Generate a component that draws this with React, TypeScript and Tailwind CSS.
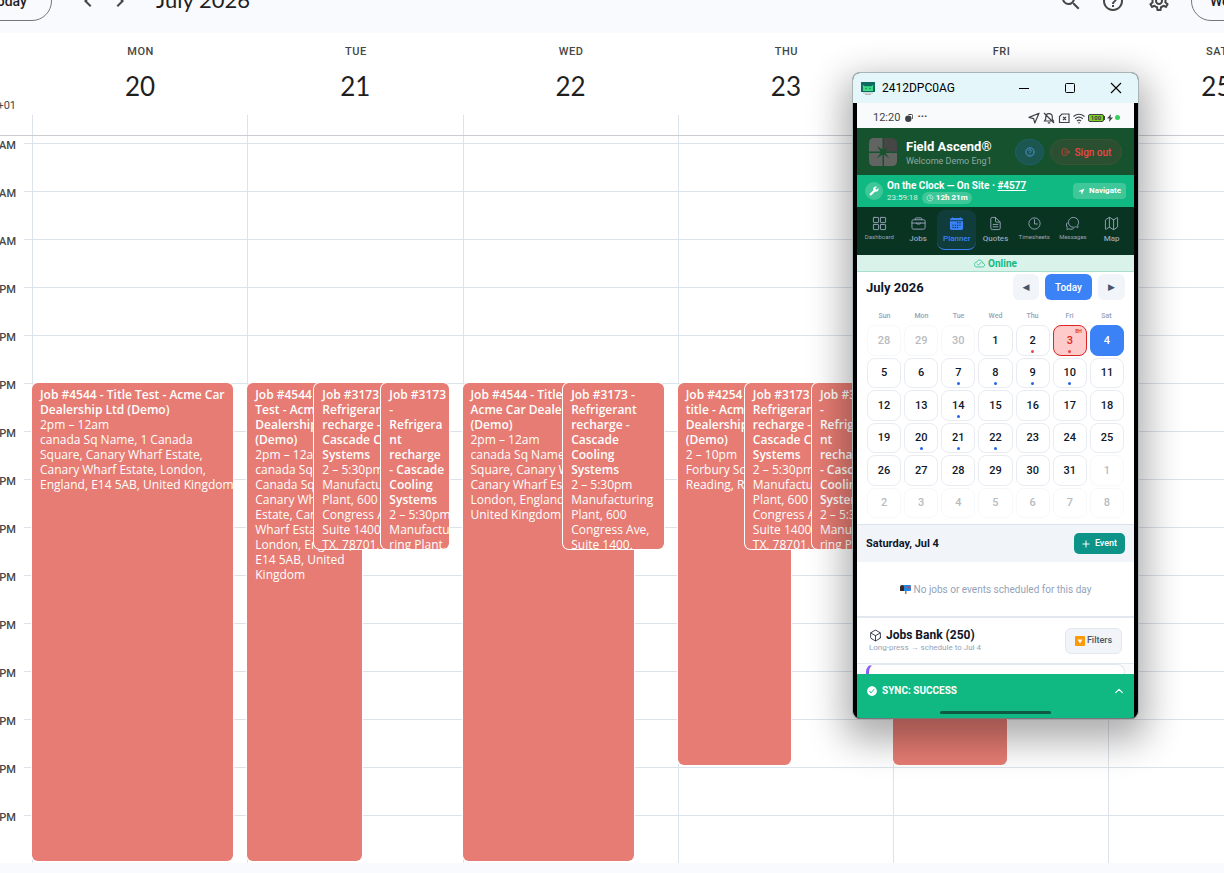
import { Fragment } from "react";
import {
  IoBriefcaseOutline,
  IoCalendar,
  IoChatbubblesOutline,
  IoCheckmarkCircle,
  IoChevronUp,
  IoCloudDoneOutline,
  IoCubeOutline,
  IoDocumentTextOutline,
  IoGridOutline,
  IoHelpCircleOutline,
  IoLogOutOutline,
  IoMapOutline,
  IoNavigate,
  IoTimeOutline,
} from "react-icons/io5";
import { MdBuild, MdChevronLeft, MdChevronRight, MdHelpOutline, MdOutlineSettings, MdSearch } from "react-icons/md";

const HOUR_HEIGHT = 48;
const FIRST_HOUR = 9;

type CalendarEvent = {
  left: number;
  width: number;
  from: number;
  to: number;
  title: string[];
  details: string[];
};

type Day = {
  name: string;
  date: number;
  events: CalendarEvent[];
};

const refrigerantDetails = ["2 – 5:30pm", "Manufacturing", "Plant, 600", "Congress Ave,", "Suite 1400,", "TX, 78701,"];

const narrowRefrigerant = (left: number): CalendarEvent => ({
  left,
  width: 53,
  from: 14,
  to: 17.5,
  title: ["Job #3173 -", "Refrigerant", "recharge -", "Cascade Cooling", "Systems"],
  details: refrigerantDetails,
});

const lastRefrigerant = (left: number): CalendarEvent => ({
  left,
  width: 31.4,
  from: 14,
  to: 17.5,
  title: ["Job #3173", "-", "Refrigera", "nt", "recharge", "- Cascade", "Cooling", "Systems"],
  details: ["2 – 5:30pm", "Manufactu", "ring Plant,"],
});

const days: Day[] = [
  {
    name: "MON",
    date: 20,
    events: [
      {
        left: 0,
        width: 94,
        from: 14,
        to: 24,
        title: ["Job #4544 - Title Test - Acme Car", "Dealership Ltd (Demo)"],
        details: [
          "2pm – 12am",
          "canada Sq Name, 1 Canada",
          "Square, Canary Wharf Estate,",
          "Canary Wharf Estate, London,",
          "England, E14 5AB, United Kingdom",
        ],
      },
    ],
  },
  {
    name: "TUE",
    date: 21,
    events: [
      {
        left: 0,
        width: 53.4,
        from: 14,
        to: 24,
        title: ["Job #4544 - Title", "Test - Acme Car", "Dealership Ltd", "(Demo)"],
        details: [
          "2pm – 12am",
          "canada Sq Name, 1",
          "Canada Square,",
          "Canary Wharf",
          "Estate, Canary",
          "Wharf Estate,",
          "London, England,",
          "E14 5AB, United",
          "Kingdom",
        ],
      },
      narrowRefrigerant(31.3),
      lastRefrigerant(62.6),
    ],
  },
  {
    name: "WED",
    date: 22,
    events: [
      {
        left: 0,
        width: 80,
        from: 14,
        to: 24,
        title: ["Job #4544 - Title Test -", "Acme Car Dealership Ltd", "(Demo)"],
        details: [
          "2pm – 12am",
          "canada Sq Name, 1 Canada",
          "Square, Canary Wharf",
          "Canary Wharf Estate,",
          "London, England, E14 5AB,",
          "United Kingdom",
        ],
      },
      {
        left: 47,
        width: 47,
        from: 14,
        to: 17.5,
        title: ["Job #3173 -", "Refrigerant", "recharge -", "Cascade", "Cooling", "Systems"],
        details: refrigerantDetails.slice(0, 5),
      },
    ],
  },
  {
    name: "THU",
    date: 23,
    events: [
      {
        left: 0,
        width: 53,
        from: 14,
        to: 22,
        title: ["Job #4254 - Job", "title - Acme Car", "Dealership Ltd", "(Demo)"],
        details: ["2 – 10pm", "Forbury Square,", "Reading, RG1"],
      },
      narrowRefrigerant(31.3),
      lastRefrigerant(62.6),
    ],
  },
  {
    name: "FRI",
    date: 24,
    events: [{ left: 0, width: 53.4, from: 14, to: 22, title: [], details: [] }],
  },
  { name: "SAT", date: 25, events: [] },
];

const hours = Array.from({ length: 15 }, (_, i) => {
  const hour = FIRST_HOUR + i;
  return hour < 12 ? `${hour} AM` : `${hour === 12 ? 12 : hour - 12} PM`;
});

const EventCard = ({ event }: { event: CalendarEvent }) => (
  <div
    className="absolute overflow-hidden rounded-md bg-[#e67c73] px-2 pt-1 font-['Open_Sans'] text-xs leading-[15px] text-white ring-1 ring-white"
    style={{
      left: `calc(${event.left}% - 1px)`,
      width: `${event.width}%`,
      top: (event.from - FIRST_HOUR) * HOUR_HEIGHT,
      height: (event.to - event.from) * HOUR_HEIGHT - 2,
    }}
  >
    {event.title.map((line) => (
      <div key={line} className="font-semibold whitespace-nowrap">
        {line}
      </div>
    ))}
    {event.details.map((line) => (
      <div key={line} className="whitespace-nowrap">
        {line}
      </div>
    ))}
  </div>
);

const TopBar = () => (
  <header className="flex h-[33px] flex-col justify-end overflow-hidden">
    <div className="-ml-9 -mr-12 flex h-16 shrink-0 items-center text-[#444746]">
      <button className="h-10 w-[88px] shrink-0 rounded-full border border-[#747775] text-sm font-medium text-[#1f1f1f]">
        Today
      </button>
      <button className="ml-5 flex w-8 items-center justify-center" aria-label="Previous week">
        <MdChevronLeft className="size-6" />
      </button>
      <button className="flex w-8 items-center justify-center" aria-label="Next week">
        <MdChevronRight className="size-6" />
      </button>
      <h1 className="ml-5 pb-0.5 font-[Lato] text-[22px] leading-7 text-[#1f1f1f]">July 2026</h1>
      <div className="ml-auto flex items-center">
        <button className="mr-[18px]" aria-label="Search">
          <MdSearch className="size-6" />
        </button>
        <button className="mr-[22px]" aria-label="Help">
          <MdHelpOutline className="size-6" />
        </button>
        <button className="mr-5" aria-label="Settings">
          <MdOutlineSettings className="size-6" />
        </button>
        <button className="h-10 w-[81px] rounded-full border border-[#747775] pl-[18px] text-left text-sm font-medium text-[#1f1f1f]">
          Week
        </button>
      </div>
    </div>
  </header>
);

const WeekView = () => (
  <main className="flex overflow-hidden bg-white">
    <div className="w-8 shrink-0">
      <div className="flex h-[103px] items-end justify-end border-b border-[#c9ccd1] pr-4 pb-[21px] text-[11px] whitespace-nowrap text-[#444746]">
        GMT+01
      </div>
      <div className="mt-[7px]">
        {hours.map((hour) => (
          <div key={hour} className="flex h-12">
            <span className="-mt-[5px] flex w-4 justify-end text-[11px] font-medium whitespace-nowrap text-[#444746]">{hour}</span>
            <span className="ml-2 w-2 border-t border-[#dde3ea]" />
          </div>
        ))}
      </div>
    </div>
    <div className="min-w-0 flex-1">
      <div className="w-[108.35%]">
        <div className="grid h-[103px] grid-cols-6 border-b border-[#c9ccd1]">
          {days.map((day) => (
            <div key={day.name} className="flex flex-col text-center">
              <div className="pt-3 pl-0.5 text-[11px] leading-[14px] font-medium tracking-wider text-[#444746]">{day.name}</div>
              <div className="mt-[11px] pl-px font-[Lato] text-[26px] leading-8 text-[#1f1f1f]">{day.date}</div>
              <div className="mt-auto h-5 border-l border-[#dde3ea]" />
            </div>
          ))}
        </div>
        <div className="grid">
          <div className="col-start-1 row-start-1 pt-[7px]">
            {hours.map((hour) => (
              <div key={hour} className="h-12 border-t border-[#dde3ea]" />
            ))}
          </div>
          <div className="col-start-1 row-start-1 grid grid-cols-6">
            {days.map((day) => (
              <div key={day.name} className="border-l border-[#dde3ea] pt-[7px]">
                <div className="relative">
                  {day.events.map((event, i) => (
                    <EventCard key={i} event={event} />
                  ))}
                </div>
              </div>
            ))}
          </div>
        </div>
      </div>
    </div>
  </main>
);

const TitleBar = () => (
  <div className="flex h-[30px] items-center bg-[#e4f6f9] pr-4 pl-2 text-black">
    <svg viewBox="0 0 14 13" className="h-[13px] w-3.5">
      <rect width="14" height="10" fill="#0d6b62" />
      <path d="M2 9V5l-.5-2L4 4.200h6L12.500 3 12 5v4z" fill="#3ddc84" />
      <circle cx="5" cy="6.500" r=".7" fill="#0d6b62" />
      <circle cx="9" cy="6.500" r=".7" fill="#0d6b62" />
      <path d="M2 10.500h10v1H2zM4 12h6v1H4z" fill="#b9b9b9" />
    </svg>
    <span className="ml-[7px] text-xs">2412DPC0AG</span>
    <div className="ml-auto flex items-center gap-[34px]">
      <button aria-label="Minimize">
        <svg viewBox="0 0 12 12" className="size-3">
          <path d="M1 6.500h10" stroke="currentColor" />
        </svg>
      </button>
      <button aria-label="Maximize">
        <svg viewBox="0 0 12 12" className="size-3" fill="none">
          <rect x="1.500" y="1.500" width="9" height="9" rx="1" stroke="currentColor" />
        </svg>
      </button>
      <button aria-label="Close">
        <svg viewBox="0 0 12 12" className="size-3">
          <path d="M1 1l10 10M11 1L1 11" stroke="currentColor" strokeWidth="1.100" />
        </svg>
      </button>
    </div>
  </div>
);

const StatusBar = () => (
  <div className="flex h-[25px] items-center bg-[#f8fafc] pt-1 pr-3.5 pl-4 text-[#3f4246]">
    <span className="pt-px text-[11px]">12:20</span>
    <svg viewBox="0 0 8 8" className="ml-[5px] size-2" fill="currentColor">
      <circle cx="3.300" cy="4.700" r="3.200" />
      <path d="M3.500.5h3a1.200 1.200 0 0 1 1.200 1.200V5" stroke="currentColor" fill="none" />
    </svg>
    <span className="ml-1 text-[11px] font-bold">···</span>
    <div className="ml-auto flex items-center gap-[3px]">
      <svg viewBox="0 0 12 12" className="size-3" fill="none" stroke="currentColor" strokeWidth="1.200" strokeLinejoin="round">
        <path d="M11 1.200L6.800 11 5.600 6.600 1 5.400z" />
      </svg>
      <svg viewBox="0 0 12 12" className="size-3" fill="none" stroke="currentColor" strokeWidth="1.200">
        <path d="M1.500 9h9L9.300 7V5a3.300 3.300 0 0 0-6.600 0v2zM4.800 10.800h2.400M1 1l10 10" />
      </svg>
      <svg viewBox="0 0 12 12" className="size-3" fill="none" stroke="currentColor" strokeWidth="1.200">
        <path d="M4 2h7v8.500H1.500V4.500zM5 5l3 3M8 5L5 8" />
      </svg>
      <svg viewBox="0 0 12 12" className="size-3" fill="none" stroke="currentColor" strokeWidth="1.200">
        <path d="M.5 4.500q5.500-4.500 11 0M2.200 6.800q3.800-3.200 7.600 0M4 9q2-1.600 4 0M6 10v1.500" />
      </svg>
      <div className="flex items-center">
        <span className="flex h-2 w-4 items-center justify-center rounded-xs border border-[#3f4246] bg-[#7ed321] text-[6px] font-bold">
          100
        </span>
        <span className="h-1 w-px bg-[#3f4246]" />
        <svg viewBox="0 0 6 8" className="ml-0.5 h-2 w-1.5" fill="currentColor">
          <path d="M4 0L0 4.500h2.500L2 8l4-4.500H3.500z" />
        </svg>
        <span className="ml-0.5 size-[5px] rounded-full bg-[#34d058]" />
      </div>
    </div>
  </div>
);

const AppHeader = () => (
  <div className="flex h-[47px] items-center bg-[#17522f] pr-3 pl-3">
    <svg viewBox="0 0 28 28" className="size-7">
      <path d="M5 0h8.500v11.500L8 8l3.500 5.500H0V5q0-5 5-5z" fill="#626462" />
      <path d="M15 0h7q6 0 6 6v7.500H16.500L19 9.500l-4 2z" fill="#454645" />
      <path d="M0 15h11.500L8 20.500l5.500-4V28H5q-5 0-5-5z" fill="#626462" />
      <path d="M16.500 15H28v8q0 5-5 5h-8V16.500l5.500 4z" fill="#626462" />
    </svg>
    <div className="ml-[9px] pt-[3px]">
      <div className="text-[13px] leading-4 font-bold text-white">Field Ascend®</div>
      <div className="text-[9px] leading-[13px] text-[#8fa9a0]">Welcome Demo Eng1</div>
    </div>
    <button
      className="ml-auto flex h-[26px] w-[29px] items-center justify-center rounded-full border border-[#1e6068] bg-[#1b5650] text-[#60a5fa]"
      aria-label="Help"
    >
      <IoHelpCircleOutline className="size-3" />
    </button>
    <button className="ml-1.5 flex h-[26px] w-[72px] items-center justify-center gap-1 rounded-full border border-[#3a5534] bg-[#2b5031] pt-px text-[10px] font-medium text-[#ef4444]">
      <IoLogOutOutline className="size-2.5" />
      Sign out
    </button>
  </div>
);

const ClockBar = () => (
  <div className="flex h-8 items-center bg-[#10b981] px-2 text-white">
    <span className="flex size-[18px] items-center justify-center rounded-full bg-white/20">
      <MdBuild className="size-2.5 -scale-x-100" />
    </span>
    <div className="ml-1 pt-px">
      <div className="text-[10px] leading-3 font-bold">
        On the Clock — On Site ·{" "}
        <a href="#4577" className="underline">
          #4577
        </a>
      </div>
      <div className="flex items-center gap-1 text-[8px] leading-3">
        <span className="text-white/80">23:59:18</span>
        <span className="flex items-center gap-0.5 rounded-full bg-white/20 px-1 font-bold">
          <IoTimeOutline className="size-2" />
          12h 21m
        </span>
      </div>
    </div>
    <button className="ml-auto flex h-4 w-[53px] items-center justify-center gap-1 rounded-[4px] bg-white/20 text-[8px] font-bold">
      <IoNavigate className="size-[7px]" />
      Navigate
    </button>
  </div>
);

const tabs = [
  { label: "Dashboard", icon: IoGridOutline, small: true },
  { label: "Jobs", icon: IoBriefcaseOutline, small: false },
  { label: "Planner", icon: IoCalendar, small: false },
  { label: "Quotes", icon: IoDocumentTextOutline, small: false },
  { label: "Timesheets", icon: IoTimeOutline, small: true },
  { label: "Messages", icon: IoChatbubblesOutline, small: true },
  { label: "Map", icon: IoMapOutline, small: false },
];

const TabBar = () => (
  <nav className="grid h-12 grid-cols-7 bg-[#0a3422] px-[3px] py-[3px]">
    {tabs.map(({ label, icon: Icon, small }) => {
      const active = label === "Planner";
      return (
        <a
          key={label}
          href={`#${label.toLowerCase()}`}
          className={`flex h-10 flex-col items-center pt-1.5 ${
            active ? "rounded-lg border-b border-[#3b82f6] bg-[#103d3b] text-[#3b82f6]" : "text-[#94a3b8]"
          }`}
        >
          <Icon className="size-[15px]" />
          <span className={small ? "mt-0.5 text-[6px] leading-2" : "mt-1 text-[8px] leading-2 font-medium"}>{label}</span>
        </a>
      );
    })}
  </nav>
);

const weekdays = ["Sun", "Mon", "Tue", "Wed", "Thu", "Fri", "Sat"];
const dotDays = [7, 8, 9, 10, 14, 20, 21, 22];

// Six weeks starting on Sunday, June 28
const monthCells = Array.from({ length: 42 }, (_, i) => {
  const day = i - 2;
  if (day < 1) return { day: day + 30, inMonth: false };
  if (day > 31) return { day: day - 31, inMonth: false };
  return { day, inMonth: true };
});

const cellClass = (day: number, inMonth: boolean) => {
  if (!inMonth) return "border-[#f7f8fa] text-[#b9bbc0]";
  if (day === 3) return "border-[#dc2626] bg-[#fecaca] text-[#dc2626]";
  if (day === 4) return "border-[#3b82f6] bg-[#3b82f6] text-white font-bold";
  return "border-[#e8ecf2] text-[#0f172a]";
};

const MonthCalendar = () => (
  <section className="bg-white px-[9px] pt-0.5 pb-1.5">
    <div className="flex items-center">
      <h2 className="pt-px text-[13px] font-bold text-[#0f172a]">July 2026</h2>
      <button className="ml-auto h-[26px] w-[26px] rounded-md bg-[#f1f5f9] pt-px font-['DejaVu_Sans'] text-[9px] text-[#475569]">◀</button>
      <button className="ml-1.5 h-[26px] w-[47px] rounded-md bg-[#3b82f6] pt-px text-[10px] font-medium text-white">Today</button>
      <button className="ml-1.5 h-[26px] w-[27px] rounded-md bg-[#f1f5f9] pt-px font-['DejaVu_Sans'] text-[9px] text-[#475569]">▶</button>
    </div>
    <div className="mt-[11px] grid grid-cols-7 text-center text-[7px] leading-[10px] font-medium text-[#94a3b8]">
      {weekdays.map((name) => (
        <span key={name}>{name}</span>
      ))}
    </div>
    <div className="mx-px mt-1 grid h-[193px] grid-cols-7 grid-rows-6 gap-x-[3px] gap-y-0.5">
      {monthCells.map(({ day, inMonth }, i) => (
        <button
          key={i}
          className={`relative flex items-center justify-center rounded-lg border pt-px text-[11px] font-medium ${cellClass(day, inMonth)}`}
        >
          {day}
          {inMonth && (day === 2 || day === 3) && <span className="absolute bottom-0.5 size-[3px] rounded-full bg-[#ef4444]" />}
          {inMonth && dotDays.includes(day) && <span className="absolute bottom-0.5 size-[3px] rounded-full bg-[#2563eb]" />}
          {inMonth && day === 3 && <span className="absolute top-0.5 right-1 text-[5px] leading-[6px] font-medium">BH</span>}
        </button>
      ))}
    </div>
  </section>
);

const Mailbox = () => (
  <svg viewBox="0 0 11 10" className="h-2.5 w-[11px]">
    <rect x="5" y="6" width="1.500" height="4" fill="#c2703d" />
    <rect x="2" y="1" width="9" height="6" rx="1" fill="#1e88e5" />
    <path d="M0 7V3q0-2 2-2t2 2v4z" fill="#3e2723" />
    <path d="M6.500 2.500h4v2h-2v-1h-2z" fill="#e53935" />
  </svg>
);

const DayPanel = () => (
  <Fragment>
    <div className="flex h-[38px] items-center border-t border-[#dbe3ee] bg-[#f1f5f9] px-[9px]">
      <h3 className="pt-0.5 text-[11px] font-bold text-[#0f172a]">Saturday, Jul 4</h3>
      <button className="ml-auto flex h-[21px] w-[51px] items-center justify-center gap-[5px] rounded-[5px] bg-[#0d9488] pt-px text-[9px] font-medium text-white">
        <svg viewBox="0 0 8 8" className="size-2" stroke="currentColor">
          <path d="M4 .5v7M.5 4h7" />
        </svg>
        Event
      </button>
    </div>
    <div className="flex h-14 items-center justify-center gap-[3px] border-b-2 border-[#e2e8f0] bg-white text-[10px] text-[#94a3b8]">
      <Mailbox />
      No jobs or events scheduled for this day
    </div>
    <div className="flex h-[45px] items-center bg-white px-3">
      <div className="pt-px">
        <div className="flex items-center gap-1 text-xs leading-[14px] font-bold text-[#0f172a]">
          <IoCubeOutline className="size-[13px]" />
          Jobs Bank (250)
        </div>
        <div className="text-[8px] leading-3 text-[#94a3b8]">Long-press → schedule to Jul 4</div>
      </div>
      <button className="ml-auto flex h-[26px] w-[57px] items-center justify-center gap-0.5 rounded-md border border-[#e2e8f0] bg-[#f1f5f9] text-[9px] font-medium text-[#475569]">
        <svg viewBox="0 0 10 10" className="size-2.5">
          <rect width="10" height="10" rx="1" fill="#fb9a04" />
          <path d="M2.500 3.500h5L5 7.500z" fill="#fff" />
        </svg>
        Filters
      </button>
    </div>
    <div className="h-[11px] overflow-hidden border-t border-[#e2e8f0] bg-[#f8fafc] px-[9px]">
      <div className="h-6 rounded-lg border border-l-[3px] border-[#e2e8f0] border-l-[#8b5cf6] bg-white" />
    </div>
  </Fragment>
);

const PhoneWindow = () => (
  <div className="absolute top-[72px] right-[85px] w-[287px] overflow-hidden rounded-lg border border-[#a9b4b6] border-b-[#777] bg-black shadow-[0_14px_36px_8px_rgba(0,0,0,0.32)]">
    <TitleBar />
    <div className="mx-1">
      <StatusBar />
      <AppHeader />
      <ClockBar />
      <TabBar />
      <div className="flex h-[17px] items-center justify-center gap-[3px] border-b border-[#a7dfcc] bg-[#d9f2ea] text-[10px] font-bold text-[#10b981]">
        <IoCloudDoneOutline className="size-[11px]" />
        Online
      </div>
      <MonthCalendar />
      <DayPanel />
      <div className="h-11 bg-[#10b981] text-white">
        <div className="flex h-[33px] items-center px-[9px] text-[10px] font-bold">
          <IoCheckmarkCircle className="size-3" />
          <span className="ml-1">SYNC: SUCCESS</span>
          <IoChevronUp className="ml-auto size-3" />
        </div>
        <div className="mx-auto mt-1 h-[3px] w-[111px] rounded-full bg-[#0e5a43]" />
      </div>
    </div>
  </div>
);

const App = () => {
  return (
    <div className="relative min-h-screen overflow-hidden bg-[#f8fafd] pb-2.5 font-[Roboto,sans-serif]">
      <TopBar />
      <WeekView />
      <PhoneWindow />
    </div>
  );
};

export default App;
